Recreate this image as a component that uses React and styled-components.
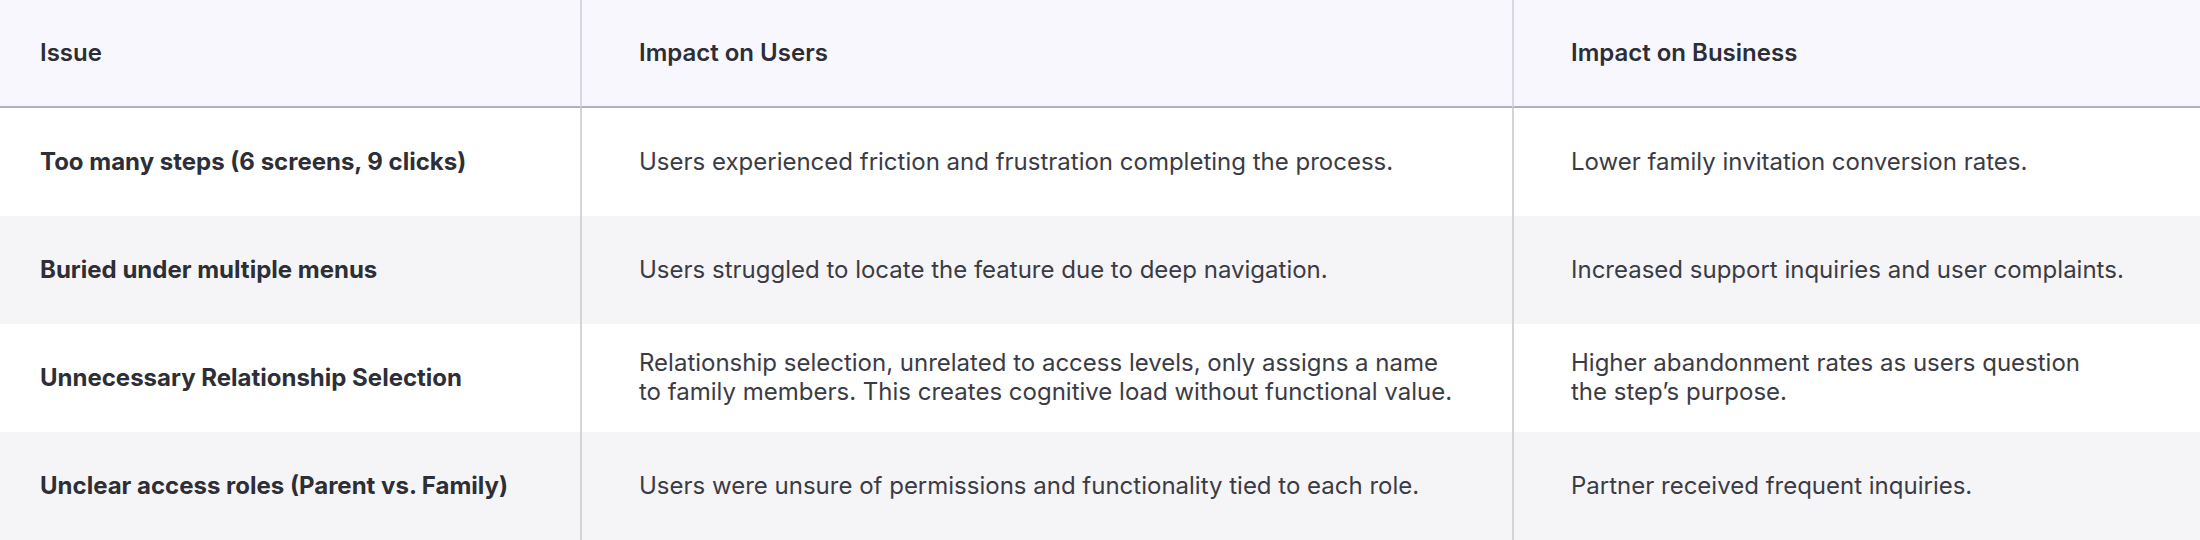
import React from "react";
import styled, { createGlobalStyle } from "styled-components";

const Global = createGlobalStyle`
  html, body { margin: 0; padding: 0; background: #ffffff; }
  body { font-family: Inter, "Noto Sans", sans-serif; -webkit-font-smoothing: antialiased; }
`;

const Table = styled.div`
  display: grid;
  grid-template-columns: 580px 932px 1fr;
  width: 2200px;
`;

const Row = styled.div`
  display: contents;
`;

const Cell = styled.div`
  box-sizing: border-box;
  height: 108px;
  display: flex;
  align-items: center;
  padding: ${(p) => (p.$first ? "0 40px" : "0 56px 0 57px")};
  background: ${(p) => p.$bg};
  border-left: ${(p) => (p.$first ? "none" : `2px solid ${p.$head ? "#d9d8e2" : "#d3d3da"}`)};
  border-bottom: ${(p) => (p.$head ? "2px solid #b3b2bb" : "none")};
  font-size: 24px;
  line-height: 28.8px;
  font-weight: ${(p) => (p.$bold ? 700 : 400)};
  color: ${(p) => (p.$bold ? "#2e2e36" : "#3b3b45")};
`;

const HeadText = styled.span`
  font-size: 24px;
  font-weight: 600;
  color: #2d2d35;
`;

const rows = [
  [
    "Too many steps (6 screens, 9 clicks)",
    "Users experienced friction and frustration completing the process.",
    "Lower family invitation conversion rates.",
  ],
  [
    "Buried under multiple menus",
    "Users struggled to locate the feature due to deep navigation.",
    "Increased support inquiries and user complaints.",
  ],
  [
    "Unnecessary Relationship Selection",
    "Relationship selection, unrelated to access levels, only assigns a name to family members. This creates cognitive load without functional value.",
    "Higher abandonment rates as users question the\u00a0step’s purpose.",
  ],
  [
    "Unclear access roles (Parent vs. Family)",
    "Users were unsure of permissions and functionality tied to each role.",
    "Partner received frequent inquiries.",
  ],
];

const headers = ["Issue", "Impact on Users", "Impact on Business"];

export default function App() {
  return (
    <>
      <Global />
      <Table>
        <Row>
          {headers.map((h, i) => (
            <Cell key={h} $head $first={i === 0} $bg="#f8f7fe">
              <HeadText>{h}</HeadText>
            </Cell>
          ))}
        </Row>
        {rows.map((r, ri) => (
          <Row key={ri}>
            {r.map((c, ci) => (
              <Cell
                key={ci}
                $first={ci === 0}
                $bold={ci === 0}
                $bg={ri % 2 === 1 ? "#f5f5f7" : "#ffffff"}
              >
                {c}
              </Cell>
            ))}
          </Row>
        ))}
      </Table>
    </>
  );
}
